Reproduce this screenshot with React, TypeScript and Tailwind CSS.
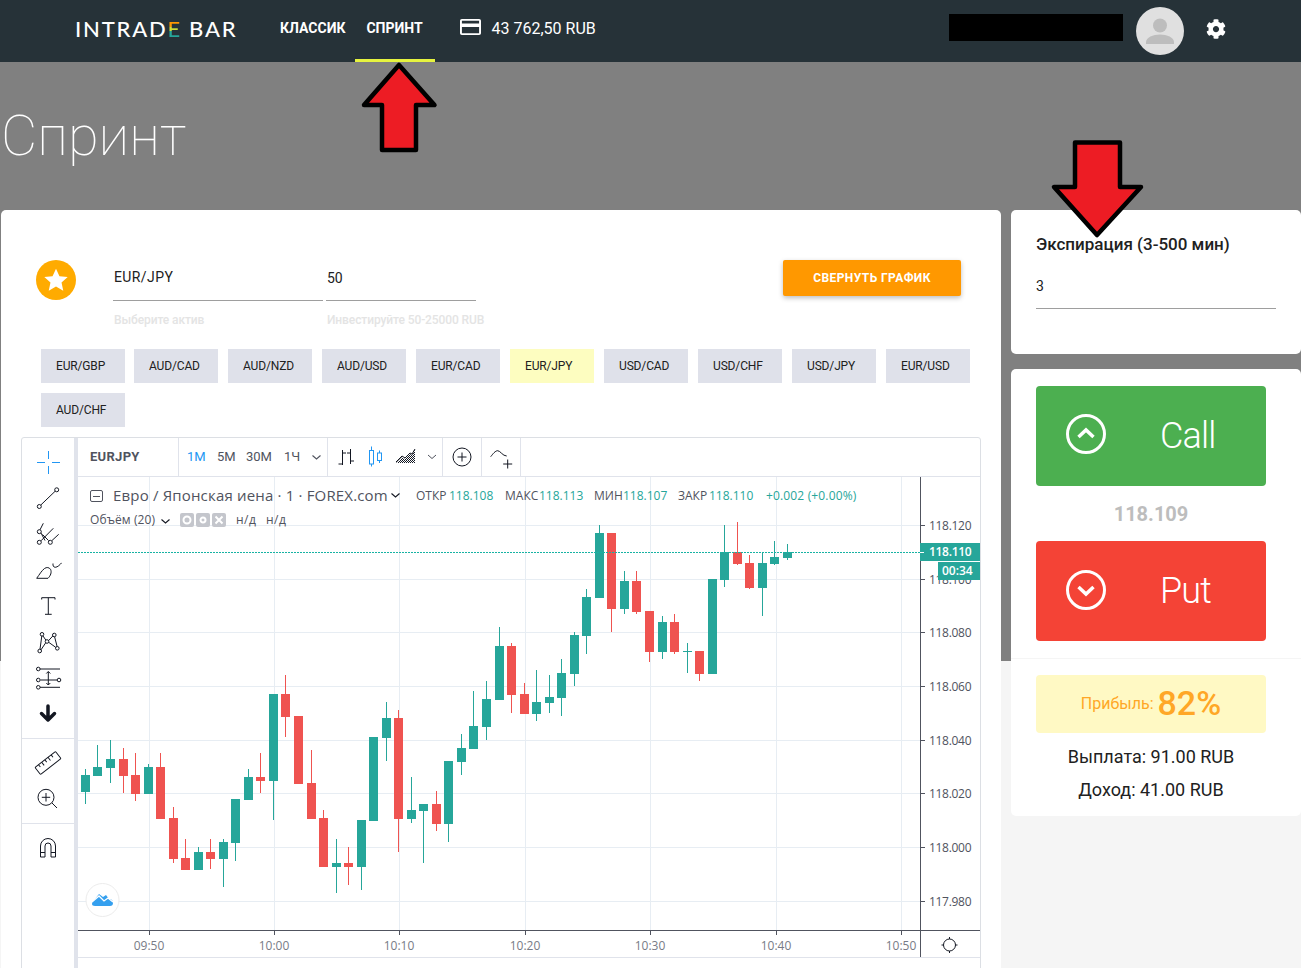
import { FaCog } from "react-icons/fa";

const chips = ["EUR/GBP", "AUD/CAD", "AUD/NZD", "AUD/USD", "EUR/CAD", "EUR/JPY", "USD/CAD", "USD/CHF", "USD/JPY", "EUR/USD", "AUD/CHF"];

// wick top, body top, body bottom, wick bottom, 1 = green
const candles: [number, number, number, number, number][] = [
  [769, 775, 792, 804, 1], [745, 767, 776, 776, 1], [740, 759, 768, 783, 1], [748, 759, 776, 793, 0],
  [753, 775, 794, 801, 0], [764, 767, 794, 794, 1], [753, 767, 819, 819, 0], [807, 818, 859, 863, 0],
  [839, 858, 870, 870, 0], [847, 852, 870, 870, 1], [839, 852, 859, 869, 0], [839, 842, 859, 887, 1],
  [799, 799, 843, 861, 1], [769, 777, 800, 800, 1], [753, 777, 781, 793, 0], [694, 694, 781, 820, 1],
  [675, 694, 717, 737, 0], [716, 716, 784, 784, 0], [750, 783, 819, 819, 0], [810, 818, 867, 867, 0],
  [839, 863, 867, 893, 1], [847, 863, 867, 885, 0], [820, 820, 867, 890, 1], [737, 737, 821, 821, 1],
  [702, 718, 738, 761, 1], [710, 718, 819, 852, 0], [777, 810, 819, 823, 1], [804, 804, 811, 863, 1],
  [791, 804, 824, 831, 0], [761, 761, 824, 842, 1], [734, 748, 762, 775, 1], [691, 726, 749, 749, 1],
  [681, 699, 727, 740, 1], [627, 646, 700, 700, 1], [643, 646, 695, 713, 0], [683, 694, 714, 714, 0],
  [670, 702, 714, 721, 1], [675, 697, 703, 713, 1], [659, 673, 698, 716, 1], [632, 635, 674, 686, 1],
  [589, 597, 636, 654, 1], [525, 533, 598, 598, 1], [533, 533, 609, 632, 0], [571, 581, 609, 614, 1],
  [571, 581, 612, 614, 0], [611, 611, 652, 662, 0], [616, 622, 652, 659, 1], [614, 622, 652, 654, 0],
  [643, 651, 652, 673, 1], [651, 651, 674, 681, 0], [579, 579, 674, 674, 1], [525, 552, 580, 587, 1],
  [522, 552, 564, 565, 0], [555, 563, 588, 589, 0], [552, 563, 588, 616, 1], [541, 557, 564, 565, 1],
  [544, 552, 558, 560, 1],
];

const priceTicks = [
  [525, "118.120"], [579, "118.100"], [632, "118.080"], [686, "118.060"],
  [740, "118.040"], [793, "118.020"], [847, "118.000"], [901, "117.980"],
] as const;

const timeTicks = [
  [149, "09:50", 400], [274, "10:00", 500], [399, "10:10", 400], [525, "10:20", 400],
  [650, "10:30", 400], [776, "10:40", 400], [901, "10:50", 400],
] as const;

function Tool({ children }: { children: React.ReactNode }) {
  return (
    <svg width="28" height="28" viewBox="0 0 28 28" fill="none" stroke="#131722" strokeWidth="1">
      {children}
    </svg>
  );
}

function LeftTools() {
  return (
    <div className="flex w-[52px] shrink-0 flex-col items-center pt-[10px] text-[#131722]">
      <div className="flex flex-col gap-[8px]">
        <Tool>
          <path d="M3 14.5h8M18 14.5h8M14.5 3v8M14.5 18v8" stroke="#2196f3" />
        </Tool>
        <Tool>
          <circle cx="22.7" cy="5.8" r="2" />
          <circle cx="5.3" cy="22.5" r="2" />
          <path d="M21.2 7.2 6.8 21" />
        </Tool>
        <Tool>
          <circle cx="5.3" cy="11.7" r="2" />
          <circle cx="5.3" cy="22.3" r="2" />
          <circle cx="16.3" cy="22.3" r="2" />
          <path d="M6 9.800 9.300 3.300M7 20.800 19.300 8.300M18 20.500l6.700-6.200M7 13l4 7.500M14.500 20.500l-6-6" />
        </Tool>
        <Tool>
          <path d="M2.700 22.300H14c2.500-2.500 4-6 2.500-9-1.200-2-4-2.300-6-.8-3 2.300-5 6-7.800 9.800Z" />
          <path d="M19 7.500c-.3 2 .5 3.800 2.200 3.800 2.500 0 4.800-2.800 6.500-4.500" />
        </Tool>
        <Tool>
          <path d="M7.700 7.500V5.700H21v1.800M14.300 5.700v16.600M11 22.300h6.700" />
        </Tool>
        <Tool>
          <circle cx="8" cy="6.300" r="1.800" />
          <circle cx="20.300" cy="7" r="1.800" />
          <circle cx="5.700" cy="23" r="1.800" />
          <circle cx="23.300" cy="20.300" r="1.800" />
          <circle cx="13" cy="13.500" r="1.800" />
          <path d="M7.800 8 6 21.200M9 8l2.800 4M18.800 8l-4.300 4.700M20.600 8.800l2.500 9.700M14.700 14.300l7 5M11.700 14.800 7 21.800" />
        </Tool>
        <Tool>
          <path d="M6 5h20M6.500 16h16.500M6 23.300h20M14.300 7.700v13.300M12.300 9.500l2-2 2 2M12.300 19l2 2 2-2" />
          <circle cx="4.300" cy="5" r="1.800" />
          <circle cx="4.300" cy="16" r="1.800" />
          <circle cx="25" cy="16" r="1.800" />
          <circle cx="4.300" cy="23.300" r="1.800" />
        </Tool>
        <Tool>
          <path d="M14 6v14M7.500 13.500 14 20l6.500-6.500" stroke="#131722" strokeWidth="3.500" strokeLinejoin="round" strokeLinecap="round" />
        </Tool>
      </div>
      <div className="mt-[10px] mb-[10px] h-px w-full bg-[#e0e3eb]" />
      <div className="flex flex-col gap-[8px]">
        <Tool>
          <g transform="rotate(-38 14 14)">
            <rect x="1" y="9.500" width="26" height="9" rx="1" />
            <path d="M5.500 9.500v3M9.500 9.500v4M13.500 9.500v3M17.500 9.500v4M21.500 9.500v3" />
          </g>
        </Tool>
        <Tool>
          <circle cx="12" cy="12.300" r="8" />
          <path d="M12 8v8.500M7.800 12.300h8.400M18 18l5 5" />
        </Tool>
      </div>
      <div className="mt-[10px] mb-[10px] h-px w-full bg-[#e0e3eb]" />
      <Tool>
        <path d="M6.500 23V12a7.500 7.500 0 0 1 15 0v11h-4.500V12a3 3 0 0 0-6 0v11ZM6.500 18.500h4.500M17 18.500h4.500" />
      </Tool>
    </div>
  );
}

function Chevron({ className }: { className?: string }) {
  return (
    <svg width="9" height="5" viewBox="0 0 9 5" fill="none" stroke="currentColor" strokeWidth="1.100" className={className}>
      <path d="m.5.500 4 3.500 4-3.500" />
    </svg>
  );
}

function Toolbar() {
  return (
    <div className="flex h-[39px] border-b border-[#e0e3eb] text-[13px] text-[#50535e]">
      <div className="flex w-[101px] items-center border-r border-[#e0e3eb] pl-[12px] font-bold tracking-[0.3px] text-[#50535e]">EURJPY</div>
      <div className="relative flex w-[149px] items-center border-r border-[#e0e3eb] text-[13px]">
        <span className="absolute left-[8px] text-[#2196f3]">1М</span>
        <span className="absolute left-[38px]">5М</span>
        <span className="absolute left-[67px]">30М</span>
        <span className="absolute left-[105px]">1Ч</span>
        <Chevron className="absolute left-[133px]" />
      </div>
      <div className="relative w-[115px] border-r border-[#e0e3eb]">
        <svg width="114" height="38" viewBox="0 0 114 38" fill="none" className="absolute top-0 left-0">
          <path d="M14.500 12v15M10.500 26h4M14.500 15H18M22.500 11v15M19 15h3.500M22.500 23H26" stroke="#131722" />
          <g stroke="#2196f3">
            <path d="M43.500 8.500v20" />
            <rect x="41.500" y="12.500" width="4" height="13.500" fill="#fff" />
            <path d="M51.500 12.500V25" />
            <rect x="49.500" y="15" width="4" height="7.500" fill="#fff" />
          </g>
          <pattern id="dots" width="2" height="2" patternUnits="userSpaceOnUse">
            <rect width="1" height="1" fill="#131722" />
            <rect x="1" y="1" width="1" height="1" fill="#131722" />
          </pattern>
          <path d="M68 25 74 19l3 2 5-5 2 1 3-6v14Z" fill="url(#dots)" />
          <path d="M68 24 74 18l3 2 5-5 2 1 3-5" stroke="#131722" />
          <path d="m100 17 4 3.500 4-3.500" stroke="#50535e" />
        </svg>
      </div>
      <div className="flex w-[39px] items-center justify-center border-r border-[#e0e3eb]">
        <svg width="20" height="20" viewBox="0 0 20 20" fill="none" stroke="#131722">
          <circle cx="10" cy="10" r="9" />
          <path d="M10 5.500v9M5.500 10h9" />
        </svg>
      </div>
      <div className="flex w-[39px] items-center justify-center border-r border-[#e0e3eb]">
        <svg width="24" height="24" viewBox="0 0 24 24" fill="none" stroke="#131722">
          <path d="M1.700 11.700c2-2.500 4.500-6 7-6 2.500 0 5 5.300 9 5.300" />
          <path d="M18.700 14.500v9M14.200 19h9" />
        </svg>
      </div>
    </div>
  );
}

function Plot() {
  return (
    <svg width="902" height="481" viewBox="78 477 902 481" className="block" shapeRendering="crispEdges" fontFamily="'Open Sans', sans-serif" fontSize="12">
      {priceTicks.map(([y]) => (
        <rect key={y} x="78" y={y} width="842" height="1" fill="#e7edf3" />
      ))}
      {timeTicks.map(([x]) => (
        <rect key={x} x={x} y="477" width="1" height="453" fill="#e7edf3" />
      ))}
      {candles.map(([wt, bt, bb, wb, up], i) => {
        const x = Math.floor(85.4 + i * 12.535);
        const color = up ? "#26a69a" : "#ef5350";
        return (
          <g key={i} fill={color}>
            <rect x={x} y={wt} width="1" height={wb - wt} />
            <rect x={x - 4} y={bt} width="9" height={Math.max(bb - bt, 1)} />
          </g>
        );
      })}
      <path d="M78 552.500H920" stroke="#18b3a3" strokeDasharray="2 1" />
      <rect x="920" y="477" width="1" height="480" fill="#50535e" />
      <rect x="78" y="930" width="902" height="1" fill="#50535e" />
      <rect x="78" y="957" width="902" height="1" fill="#e0e3eb" />
      {priceTicks.map(([y, label]) => (
        <g key={label}>
          <rect x="921" y={y} width="4" height="1" fill="#50535e" />
          <text x="929" y={y + 5} fill="#50535e" letterSpacing="-0.3" shapeRendering="auto">{label}</text>
        </g>
      ))}
      {timeTicks.map(([x, label, weight]) => (
        <g key={label}>
          <rect x={x} y="931" width="1" height="4" fill="#50535e" />
          <text x={x} y="950" textAnchor="middle" fill="#787b86" fontWeight={weight} shapeRendering="auto">{label}</text>
        </g>
      ))}
      <rect x="920" y="543" width="60" height="18" fill="#26a69a" />
      <rect x="920" y="552" width="4" height="1" fill="#fff" />
      <text x="929" y="556" fill="#fff" fontWeight="600" letterSpacing="-0.3">118.110</text>
      <rect x="938" y="562" width="42" height="18" fill="#26a69a" />
      <text x="942" y="575" fill="#fff" fontWeight="600">00:34</text>
      <g fill="none" stroke="#131722" shapeRendering="auto">
        <circle cx="949.500" cy="945" r="6" />
        <path d="M949.500 937v2M949.500 951v2M941.500 945h2M955.500 945h2" />
      </g>
      <circle cx="102.500" cy="900" r="16.500" fill="#fff" stroke="#ececec" shapeRendering="auto" />
      <path d="M92 904c0-3 2-4 3-5l4-5 4 3 3-2 3 4c3 0 4 2 4 4 0 2-1 3-3 3H95c-2 0-3-1-3-2Z" fill="#35a0ef" shapeRendering="auto" />
      <path d="M92 902 99 896l5 5 4-3 5 4" fill="none" stroke="#fff" strokeWidth="1.300" shapeRendering="auto" />
    </svg>
  );
}

function Legend() {
  return (
    <div className="pointer-events-none absolute top-[39px] left-0 font-['Open_Sans',sans-serif] text-[#50535e]">
      <div className="absolute top-[13px] left-[12px] h-[12px] w-[13px] rounded-[2px] border border-[#50535e] after:absolute after:top-[4.500px] after:left-[2px] after:h-px after:w-[7px] after:bg-[#50535e]" />
      <span className="absolute top-[7px] left-[35px] text-[15px] leading-[22px] tracking-[0.17px] whitespace-nowrap">Евро / Японская иена · 1 · FOREX.com</span>
      <Chevron className="absolute top-[16px] left-[313px] text-[#131722]" />
      <div className="absolute top-[10px] left-[338px] flex text-[12px] leading-[18px] whitespace-nowrap">
        <span className="absolute left-0">ОТКР</span>
        <span className="absolute left-[33px] text-[#26a69a]">118.108</span>
        <span className="absolute left-[89px]">МАКС</span>
        <span className="absolute left-[123px] text-[#26a69a]">118.113</span>
        <span className="absolute left-[178px]">МИН</span>
        <span className="absolute left-[207px] text-[#26a69a]">118.107</span>
        <span className="absolute left-[262px]">ЗАКР</span>
        <span className="absolute left-[293px] text-[#26a69a]">118.110</span>
        <span className="absolute left-[350px] tracking-[0.15px] text-[#26a69a]">+0.002 (+0.00%)</span>
      </div>
      <span className="absolute top-[34px] left-[12px] text-[12px] leading-[18px] tracking-[0.1px] whitespace-nowrap">Объём (20)</span>
      <Chevron className="absolute top-[42px] left-[83px] text-[#131722]" />
      <div className="absolute top-[36px] left-[102px] flex gap-[2px]">
        {["M7 3.500a3.500 3.500 0 1 0 0 7 3.500 3.500 0 0 0 0-7Z", "M7 4.500a2.500 2.500 0 1 0 0 5 2.500 2.500 0 0 0 0-5Z", "m3.500 3.500 7 7M10.500 3.500l-7 7"].map((d) => (
          <svg key={d} width="14" height="14" viewBox="0 0 14 14" fill="none" className="rounded-[2px] bg-[#c4c6cc]">
            <path d={d} stroke="#fff" strokeWidth="2" />
          </svg>
        ))}
      </div>
      <span className="absolute top-[34px] left-[158px] text-[12px] leading-[18px] tracking-[0.5px] whitespace-nowrap">н/д</span>
      <span className="absolute top-[34px] left-[188px] text-[12px] leading-[18px] tracking-[0.5px] whitespace-nowrap">н/д</span>
    </div>
  );
}

function Chart() {
  return (
    <div className="mt-[10px] ml-[20px] flex h-[600px] w-[960px] rounded-t-[3px] border border-[#dcdfe4] bg-white">
      <LeftTools />
      <div className="w-[4px] shrink-0 bg-[#e0e3eb]" />
      <div className="relative min-w-0 flex-1">
        <Toolbar />
        <Plot />
        <Legend />
      </div>
    </div>
  );
}

function Field({ width, value, hint, valueClass }: { width: string; value: string; hint: string; valueClass?: string }) {
  return (
    <div className={width}>
      <div className={`h-[41px] border-b border-[#9e9e9e] text-[14px] leading-[34px] text-[#212121] ${valueClass ?? ""}`}>{value}</div>
      <div className="mt-[11px] pl-[1px] text-[12px] leading-[16px] font-medium tracking-[-0.1px] whitespace-nowrap text-[#e4e4e4]">{hint}</div>
    </div>
  );
}

function TradeButton({ label, up, className }: { label: string; up?: boolean; className: string }) {
  return (
    <button type="button" className={`flex h-[100px] w-[230px] items-center rounded-[4px] pl-[30px] text-white ${className}`}>
      <svg width="40" height="40" viewBox="0 0 40 40" fill="none" stroke="#fff" className={up ? "-mt-[5px]" : "-mt-[3px]"}>
        <circle cx="20" cy="20" r="18.500" strokeWidth="3" />
        <path d={up ? "m12.500 23 7.500-7 7.500 7" : "m12.500 17 7.500 7 7.500-7"} strokeWidth="3.500" />
      </svg>
      <span className="ml-[54px] text-[36px] leading-none font-light tracking-[-0.8px]">{label}</span>
    </button>
  );
}

function Arrows() {
  return (
    <svg width="1301" height="300" viewBox="0 0 1301 300" className="pointer-events-none absolute top-0 left-0" fill="#ed1c24" stroke="#000" strokeWidth="4.500" strokeLinejoin="round">
      <path d="M399 65 434.500 105H416V150H382V105H364Z" />
      <path d="M1075 142.500H1120V187H1141L1097 235 1054 187H1075Z" />
    </svg>
  );
}

export default function App() {
  return (
    <div className="relative h-[968px] overflow-hidden bg-[linear-gradient(#808080_661px,#f5f5f5_661px)] font-['Roboto',sans-serif]">
      <header className="flex h-[62px] items-stretch bg-[#263238] pl-[75px] text-white">
        <div className="flex w-[162px] items-center pb-[4px] font-['Lato',sans-serif] text-[22px] leading-none font-medium tracking-[1.800px] whitespace-nowrap">
          <span>INTRAD</span>
          <span className="bg-[linear-gradient(#ff9800_40%,#cddc39_40%,#cddc39_60%,#26a69a_60%)] bg-clip-text text-transparent">E</span>
          <span className="ml-[7px]">BAR</span>
        </div>
        <nav className="ml-[43px] flex text-[14px] font-bold uppercase">
          <a className="flex items-center pr-[9px] pb-[5px]">Классик</a>
          <a className="flex w-[80px] items-center justify-center border-b-[3px] border-[#e6f33f] pb-[2px]">Спринт</a>
        </nav>
        <div className="ml-[25px] flex items-center gap-[11px] pb-[4px] text-[16px]">
          <svg width="21" height="16" viewBox="0 0 22 18" preserveAspectRatio="none" fill="#fff" className="-mt-[4px]">
            <path fillRule="evenodd" d="M2 0h18a2 2 0 0 1 2 2v14a2 2 0 0 1-2 2H2a2 2 0 0 1-2-2V2a2 2 0 0 1 2-2Zm0 5h18V2H2Zm0 4v7h18V9Z" />
          </svg>
          <span>43 762,50 RUB</span>
        </div>
        <div className="ml-auto flex items-center pr-[75px] pb-[1px]">
          <div className="mb-[6px] h-[27px] w-[174px] bg-black" />
          <div className="ml-[13px] flex h-[48px] w-[48px] items-center justify-center rounded-full bg-[#e0e0e0]">
            <svg width="30" height="30" viewBox="0 0 30 30" fill="#bdbdbd">
              <circle cx="15" cy="9.500" r="7" />
              <path d="M1 28v-2c0-4.500 7-7.500 14-7.500S29 21.500 29 26v2Z" />
            </svg>
          </div>
          <FaCog className="mb-[4px] ml-[22px] text-[20px] text-white" />
        </div>
      </header>

      <div className="h-[148px] pt-[39px] pl-[1px]">
        <h1 className="text-[56px] leading-[70px] font-thin text-white">Спринт</h1>
      </div>

      <div className="flex items-start gap-[10px] pl-[1px]">
        <section className="h-[800px] w-[1000px] shrink-0 rounded-[5px] bg-white pt-[50px]">
          <div className="flex h-[89px]">
            <div className="ml-[35px] flex h-[40px] w-[40px] items-center justify-center rounded-full bg-[#ffab00]">
              <svg width="26" height="26" viewBox="0 0 24 24" fill="#fff">
                <path d="m12 1.500 3.200 7 7.600.8-5.700 5.100 1.600 7.500L12 18.100l-6.700 3.800 1.600-7.500-5.700-5.100 7.600-.8Z" />
              </svg>
            </div>
            <div className="ml-[37px] flex gap-[3px]">
              <Field width="w-[210px]" value="EUR/JPY" hint="Выберите актив" valueClass="pl-[1px] tracking-[0.4px]" />
              <Field width="w-[150px]" value="50" hint="Инвестируйте 50-25000 RUB" valueClass="pl-[1px] leading-[36px]" />
            </div>
            <button type="button" className="ml-[307px] h-[36px] w-[178px] rounded-[2px] bg-[#ff9800] text-[12px] font-bold tracking-[0.4px] text-white uppercase shadow-[0_2px_5px_rgba(0,0,0,0.26)]">
              Свернуть график
            </button>
          </div>
          <div className="ml-[39px] flex flex-wrap gap-x-[10px] gap-y-[10px]">
            {chips.map((chip, i) => (
              <div key={chip} className={`flex h-[34px] w-[84px] items-center pl-[15px] text-[12px] tracking-[-0.15px] text-[#212121] ${i === 0 || i === 10 ? "ml-[1px] -mr-[1px]" : ""} ${chip === "EUR/JPY" ? "bg-[#fdfdc0]" : "bg-[#dfe1ea]"}`}>
                {chip}
              </div>
            ))}
          </div>
          <Chart />
        </section>

        <aside className="flex w-[290px] shrink-0 flex-col gap-[15px]">
          <div className="h-[144px] rounded-[5px] bg-white px-[25px] pt-[24px]">
            <div className="text-[17px] leading-[20px] font-medium text-[#212121]">Экспирация (3-500 мин)</div>
            <div className="mt-[12px] h-[43px] border-b border-[#9e9e9e] pt-[10px] text-[14px] leading-[20px] text-[#212121]">3</div>
          </div>
          <div className="flex h-[447px] flex-col items-center rounded-[5px] bg-white pt-[17px] pr-[35px] pl-[25px]">
            <TradeButton label="Call" up className="bg-[#4caf50]" />
            <div className="flex h-[55px] items-center text-[20px] font-bold text-[#bdbdbd]">118.109</div>
            <TradeButton label="Put" className="bg-[#f44336]" />
            <div className="mt-[17px] -mr-[35px] -ml-[25px] h-px w-[290px] bg-[#f5f5f5]" />
            <div className="mt-[16px] flex h-[58px] w-[230px] items-center justify-center gap-[4px] rounded-[4px] bg-[#fff9c4] text-[#ffa726]">
              <span className="text-[16px]">Прибыль:</span>
              <span className="-mt-[3px] text-[34px] leading-none font-medium">82%</span>
            </div>
            <div className="mt-[7px] text-[18px] leading-[33px] text-[#212121]">Выплата: 91.00 RUB</div>
            <div className="text-[18px] leading-[33px] text-[#212121]">Доход: 41.00 RUB</div>
          </div>
        </aside>
      </div>

      <Arrows />
    </div>
  );
}
